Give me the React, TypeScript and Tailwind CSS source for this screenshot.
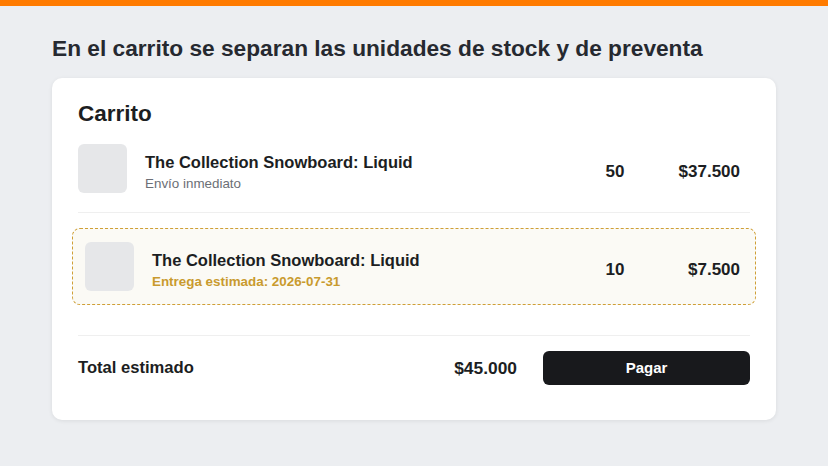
import React from 'react';

type Item = {
    name: string;
    note: string;
    qty: number;
    price: string;
    preorder?: boolean;
};

const items: Item[] = [
    { name: 'The Collection Snowboard: Liquid', note: 'Envío inmediato', qty: 50, price: '$37.500' },
    { name: 'The Collection Snowboard: Liquid', note: 'Entrega estimada: 2026-07-31', qty: 10, price: '$7.500', preorder: true },
];

const CartRow = ({ item }: { item: Item }) =>
{
    return (
        <div className="flex items-center">
            <div className="w-[49px] h-[49px] rounded-[6px] bg-[#e6e7e9] shrink-0" />
            <div className="ml-[18px] flex-1 min-w-0 pt-[6px]">
                <div className="text-[16.5px] leading-[20px] font-bold text-[#1c1e22]">{item.name}</div>
                {item.preorder ? (
                    <div className="mt-[3px] text-[13.4px] leading-[17px] font-bold text-[#c99a2e]">{item.note}</div>
                ) : (
                    <div className="mt-[3px] text-[13.4px] leading-[17px] text-[#6c6f76]">{item.note}</div>
                )}
            </div>
            <div className="w-[40px] pt-[6px] text-center text-[17px] font-bold text-[#1c1e22]">{item.qty}</div>
            <div className="w-[105px] pt-[6px] text-right text-[17px] font-bold text-[#1c1e22]">{item.price}</div>
        </div>
    );
};

export default function App()
{
    return (
        <div className="w-[828px] h-[466px] bg-[#eceef1] overflow-hidden font-['Liberation_Sans',Arial,sans-serif]">
            <div className="h-[6px] bg-[#ff7b00]" />
            <div className="px-[52px]">
                <h1 className="pt-[28px] text-[22.7px] leading-[28px] font-bold text-[#262930]">
                    En el carrito se separan las unidades de stock y de preventa
                </h1>

                <div className="mt-[16px] bg-white rounded-[10px] shadow-[0_1px_4px_rgba(0,0,0,0.08)] px-[26px] pt-[22px] pb-[35px]">
                    <h2 className="text-[22.5px] leading-[28px] font-bold text-[#1c1e22]">Carrito</h2>

                    <div className="mt-[16px] pb-[19px] border-b border-[#efefef] pr-[10px]">
                        <CartRow item={items[0]} />
                    </div>

                    <div className="mt-[15px] -mx-[6px] rounded-[8px] border border-dashed border-[#cf9f36] bg-[#fbfaf5] pl-[12px] pr-[15px] py-[13px]">
                        <CartRow item={items[1]} />
                    </div>

                    <div className="mt-[30px] border-t border-[#efefef] pt-[15px] flex items-center">
                        <div className="flex-1 text-[16.6px] font-bold text-[#1c1e22]">Total estimado</div>
                        <div className="text-[17.4px] font-bold text-[#1c1e22]">$45.000</div>
                        <button className="ml-[26px] w-[207px] h-[34px] rounded-[6px] bg-[#18191c] text-white text-[15px] font-bold">
                            Pagar
                        </button>
                    </div>
                </div>
            </div>
        </div>
    );
}
